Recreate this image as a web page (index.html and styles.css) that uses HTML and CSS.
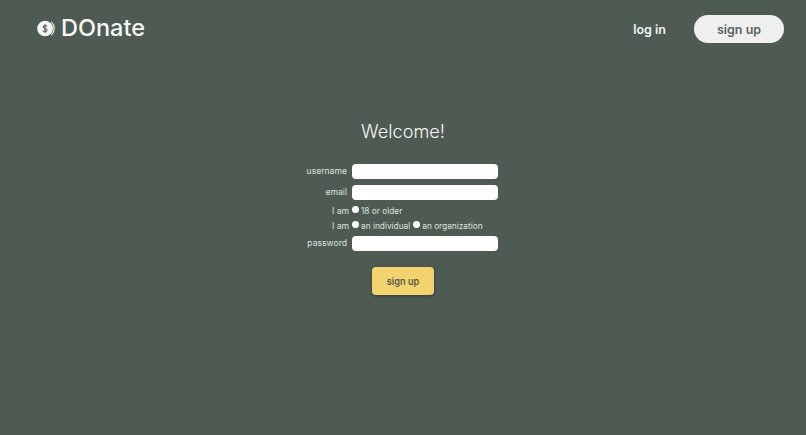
FILE: index.html
```html
<!DOCTYPE html>
<html>
<head>
    <title>DOnate</title>
    <link rel="stylesheet" href="styles.css">
</head>
<body>
    <header class="topbar">
        <a class="brand" href="#">
            <svg class="brand-icon" viewBox="0 0 19 20" width="18" height="19">
                <circle cx="8.5" cy="10" r="8.3" fill="#f4f4f2"/>
                <path d="M15.3 3a10 10 0 0 1 0 14" fill="none" stroke="#f4f4f2" stroke-width="1.2"/>
                <path d="M10.600 8c-.3-.8-1.100-1.200-2.100-1.200-1.100 0-1.900.6-1.900 1.500 0 2 4.100 1.200 4.100 3.300 0 1-.9 1.600-2.200 1.600-1 0-1.800-.4-2.200-1.200M8.500 5.200v9.600" fill="none" stroke="#4d5b53" stroke-width="1.100"/>
            </svg>
            <span class="brand-name">DOnate</span>
        </a>
        <nav class="nav">
            <a class="nav-login" href="#">log in</a>
            <a class="nav-signup" href="#">sign up</a>
        </nav>
    </header>

    <main class="main">
        <h1>Welcome!</h1>
        <form class="signup-form">
            <label class="field-label" for="username">username</label>
            <input class="text-input" type="text" id="username">

            <label class="field-label" for="email">email</label>
            <input class="text-input" type="email" id="email">

            <span class="field-label field-label-wide">I am</span>
            <div class="radio-row">
                <input type="radio" id="adult" name="age">
                <label for="adult">18 or older</label>
            </div>

            <span class="field-label field-label-wide">I am</span>
            <div class="radio-row">
                <input type="radio" id="individual" name="type">
                <label for="individual">an individual</label>
                <input type="radio" id="organization" name="type">
                <label for="organization">an organization</label>
            </div>

            <label class="field-label" for="password">password</label>
            <input class="text-input" type="password" id="password">
        </form>
        <button class="submit-button" type="button">sign up</button>
    </main>
</body>
</html>
```

FILE: styles.css
```css
body, h1 {
    margin: 0;
    padding: 0;
}

body {
    height: 435px;
    overflow: hidden;
    background-color: #4d5b53;
    color: #f2f2f0;
    font-family: "Inter", "Liberation Sans", sans-serif;
}

a {
    color: inherit;
    text-decoration: none;
}

.topbar {
    display: flex;
    justify-content: space-between;
    align-items: center;
    height: 58px;
    padding: 0 22px 0 37px;
}

.brand {
    display: flex;
    align-items: center;
    gap: 6px;
    font-size: 23.5px;
    font-weight: 500;
    color: #f6f6f4;
}

.brand-icon {
    margin-top: -2px;
}

.brand-name {
    margin-top: -3px;
}

.nav {
    display: flex;
    align-items: center;
    gap: 29px;
    font-size: 12.5px;
    font-weight: 600;
}

.nav-login {
    margin-right: -1px;
}

.nav-signup {
    display: flex;
    justify-content: center;
    align-items: center;
    width: 90px;
    height: 28px;
    border-radius: 14px;
    background-color: #efefef;
    color: #5b645f;
}

.main {
    display: flex;
    flex-direction: column;
    align-items: center;
}

h1 {
    margin-top: 62px;
    font-size: 18.2px;
    font-weight: 300;
    line-height: 22px;
    color: #f6f6f4;
}

.signup-form {
    display: grid;
    grid-template-columns: 1fr 146px;
    grid-template-rows: 20.5px 19px 15px 17.5px 15px;
    column-gap: 5px;
    align-items: start;
    width: 202px;
    padding-right: 12px;
    margin-top: 22px;
    font-size: 8.6px;
    line-height: 15px;
    color: #dfe2df;
}

.field-label {
    text-align: right;
}

.field-label-wide {
    margin-right: -2px;
}

.text-input {
    box-sizing: border-box;
    width: 146px;
    height: 15px;
    padding: 0 4px;
    border: none;
    border-radius: 4px;
    background-color: #fff;
}

.radio-row {
    display: flex;
    align-items: center;
    gap: 2px;
    height: 15px;
    font-size: 8.3px;
    white-space: nowrap;
}

.radio-row input {
    appearance: none;
    width: 7px;
    height: 7px;
    margin: -3px 0 0 0;
    border-radius: 50%;
    background-color: #fff;
}

.radio-row label + input {
    margin-left: 1px;
}

.submit-button {
    width: 62px;
    height: 28px;
    margin-top: 16px;
    border: none;
    border-radius: 4px;
    background-color: #f3d26f;
    color: #5a5a48;
    font-family: inherit;
    font-size: 9.2px;
    font-weight: 600;
    box-shadow: 0 1px 3px rgba(0, 0, 0, 0.35);
}
```
